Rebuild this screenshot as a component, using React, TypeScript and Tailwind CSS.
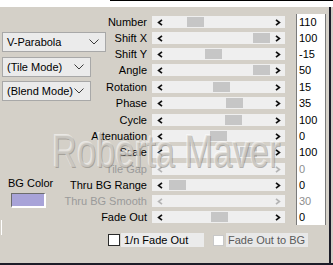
import React from "react";

type Row = {
  label: string;
  value: string;
  thumb?: number;
  h: number;
  disabled?: boolean;
};

const ROWS: Row[] = [
  { label: "Number", value: "110", thumb: 35, h: 16 },
  { label: "Shift X", value: "100", thumb: 101, h: 16 },
  { label: "Shift Y", value: "-15", thumb: 53, h: 16 },
  { label: "Angle", value: "50", thumb: 101, h: 17 },
  { label: "Rotation", value: "15", thumb: 61, h: 16 },
  { label: "Phase", value: "35", thumb: 74, h: 17 },
  { label: "Cycle", value: "100", thumb: 73, h: 16 },
  { label: "Attenuation", value: "0", thumb: 58, h: 16 },
  { label: "Scale", value: "100", thumb: 88, h: 17 },
  { label: "Tile Gap", value: "0", h: 16, disabled: true },
  { label: "Thru BG Range", value: "0", thumb: 17, h: 16 },
  { label: "Thru BG Smooth", value: "30", h: 16, disabled: true },
  { label: "Fade Out", value: "0", thumb: 59, h: 16 },
];

function Arrow({ dir, disabled }: { dir: "l" | "r"; disabled?: boolean }) {
  const pts = dir === "l" ? "5,0.8 1.6,3.5 5,6.2" : "1,0.8 4.4,3.5 1,6.2";
  return (
    <svg width="6" height="7" viewBox="0 0 6 7" className="shrink-0">
      <polyline
        points={pts}
        fill="none"
        stroke={disabled ? "#b4b4b4" : "#111"}
        strokeWidth="1.7"
      />
    </svg>
  );
}

function Chevron() {
  return (
    <svg width="10" height="6" viewBox="0 0 10 6" className="shrink-0">
      <polyline points="0.5,0.5 5,5 9.5,0.5" fill="none" stroke="#3c3c3c" strokeWidth="1" />
    </svg>
  );
}

function Select({ text, w }: { text: string; w: string }) {
  return (
    <div className={`${w} h-[20px] flex items-center justify-between pl-[4px] pr-[6px] bg-[#ebebeb] border border-[#a8a8a8] text-[11px] leading-[18px] whitespace-nowrap text-black`}>
      <span>{text}</span>
      <Chevron />
    </div>
  );
}

function SliderRow({ row }: { row: Row }) {
  const dis = row.disabled;
  return (
    <div className="flex items-stretch" style={{ height: row.h }}>
      <div className={`w-[39px] flex justify-end whitespace-nowrap leading-[16px] ${dis ? "text-[#9a9a9a]" : "text-black"}`}>
        <span>{row.label}</span>
      </div>
      <div className="ml-[5px] mt-[2px] w-[133px] h-[12px] bg-[#efefef] flex items-center relative">
        <div className="pl-[5px]">
          <Arrow dir="l" disabled={dis} />
        </div>
        {row.thumb !== undefined && (
          <div
            className="absolute top-[1px] w-[17px] h-[10px] bg-[#c6c6c6]"
            style={{ left: row.thumb }}
          />
        )}
        <div className="ml-auto pr-[4px]">
          <Arrow dir="r" disabled={dis} />
        </div>
      </div>
      <div className={`ml-[11px] w-[30px] bg-white border-l border-r border-[#7a7a7a] pl-[2px] leading-[16px] ${dis ? "text-[#8e8e8e]" : "text-black"}`}>
        {row.value}
      </div>
    </div>
  );
}

export default function App() {
  return (
    <div className="w-[333px] h-[265px] overflow-hidden bg-[#d4d0c8] font-['Liberation_Sans',Arial,sans-serif] text-[11px] relative flex flex-col">
      <div className="h-[7px] bg-white shrink-0 flex">
        <div className="w-[110px]" />
        <div className="flex-1 h-[1px] bg-black" />
      </div>
      <div className="flex-1 flex">
        <div className="w-[329px] flex">
          {/* left controls */}
          <div className="w-[108px] shrink-0 flex flex-col pt-[25px] pl-[2px]">
            <Select text="V-Parabola" w="w-[104px]" />
            <div className="mt-[5px]">
              <Select text="(Tile Mode)" w="w-[89px]" />
            </div>
            <div className="mt-[4px]">
              <Select text="(Blend Mode)" w="w-[89px]" />
            </div>
            <div className="mt-[76px] pl-[6px] text-black leading-[13px]">BG Color</div>
            <div className="mt-[3px] ml-[9px] w-[35px] h-[15px] bg-[#a8a3d8] border-t border-l border-[#6c6c6c] border-b-2 border-r-2 border-b-white border-r-white" />
            <div className="mt-[12px] -ml-[1px] w-[1px] h-[15px] bg-white" />
          </div>

          {/* sliders */}
          <div className="flex flex-col pt-[7px]">
            {ROWS.map((r) => (
              <SliderRow key={r.label} row={r} />
            ))}
            <div className="mt-[9px] flex items-center h-[12px] whitespace-nowrap">
              <div className="w-[12px] h-[12px] bg-white border border-[#2a2a2a]" />
              <div className="ml-[1px] w-[83px] h-[14px] bg-[#ebebeb] pl-[3px] leading-[14px] text-black">1/n Fade Out</div>
              <div className="ml-[9px] w-[11px] h-[11px] bg-white border border-[#c8c8c8]" />
              <div className="ml-[2px] w-[82px] h-[14px] bg-[#e8e8e8] pl-[2px] leading-[14px] text-[#5a5a5a]">Fade Out to BG</div>
            </div>
          </div>
        </div>
        <div className="w-[2px] bg-[#1c1c28]" />
        <div className="flex-1" />
      </div>
      <div className="h-[2px] bg-[#1c1c28] shrink-0" />

      {/* watermark overlay */}
      <div className="absolute left-[52px] top-[128px] pointer-events-none">
        <div className="text-[46px] leading-[46px] origin-left scale-x-[0.75] whitespace-nowrap text-[#dcd9d3]/60 [text-shadow:1px_1px_0_rgba(120,116,110,0.5),-1px_-1px_0_rgba(255,255,255,0.55)]">
          Roberta Maver
        </div>
      </div>
    </div>
  );
}
